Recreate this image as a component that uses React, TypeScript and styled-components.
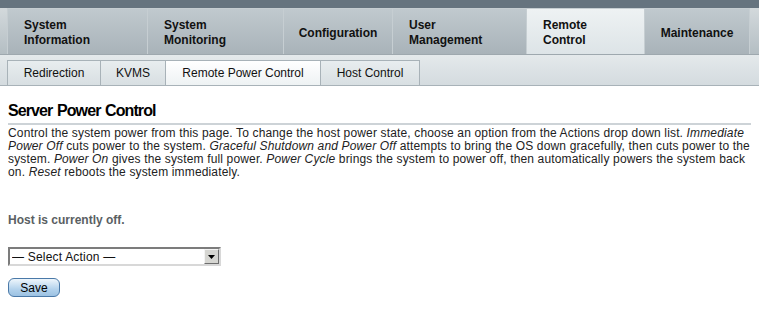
import React from 'react';
import styled, { createGlobalStyle } from 'styled-components';

const GlobalStyle = createGlobalStyle`
  body {
    margin: 0;
    background: #ffffff;
    font-family: "Liberation Sans", Arial, sans-serif;
  }
`;

const Page = styled.div`
  width: 759px;
`;

const TopStrip = styled.div`
  height: 8px;
  background: #66747f;
`;

const MainTabs = styled.div`
  display: flex;
  padding-left: 7px;
  height: 46px;
  background: linear-gradient(#d3d9dc, #b4bec3);
  border-bottom: 1px solid #9ea8ae;
`;

const MainTab = styled.div<{ $w: number; $active?: boolean; $center?: boolean; $first?: boolean }>`
  box-sizing: border-box;
  width: ${(p) => p.$w}px;
  height: 46px;
  border: 1px solid #c6ced2;
  border-left-width: ${(p) => (p.$first ? 1 : 0)}px;
  border-bottom: none;
  background: ${(p) =>
    p.$active
      ? 'linear-gradient(#eef2f3, #dde4e7)'
      : 'linear-gradient(#c0c9ce, #a9b3b9)'};
  display: flex;
  align-items: center;
  justify-content: ${(p) => (p.$center ? 'center' : 'flex-start')};
  padding-left: ${(p) => (p.$center ? 0 : 16)}px;
  padding-top: 3px;
  font-size: 12px;
  font-weight: bold;
  line-height: 15px;
  color: #111;
`;

const TabLabel = styled.span`
  white-space: pre-line;
`;

const SubBar = styled.div`
  display: flex;
  align-items: flex-end;
  height: 30px;
  padding-left: 7px;
  background: linear-gradient(#e4e9eb, #d4dbdf);
  border-bottom: 1px solid #a8b2b8;
`;

const SubTab = styled.div<{ $w: number; $active?: boolean; $first?: boolean }>`
  box-sizing: border-box;
  width: ${(p) => p.$w}px;
  height: 25px;
  border: 1px solid #a8b2b8;
  border-left-width: ${(p) => (p.$first ? 1 : 0)}px;
  border-bottom: none;
  background: ${(p) =>
    p.$active ? 'linear-gradient(#ffffff, #eef2f3)' : 'linear-gradient(#e8edef, #d8dfe2)'};
  display: flex;
  align-items: center;
  justify-content: center;
  font-size: 12px;
  color: #111;
`;

const Content = styled.div`
  padding: 0 0 0 8px;
`;

const Heading = styled.h1`
  margin: 16px 8px 0 0;
  padding-bottom: 3px;
  font-size: 16px;
  line-height: 18px;
  font-weight: bold;
  letter-spacing: -0.9px;
  word-spacing: 1px;
  color: #000;
  border-bottom: 2px solid #cdd3d7;
`;

const Body = styled.p`
  margin: 2px 0 0;
  font-size: 12px;
  line-height: 13px;
  letter-spacing: 0.15px;
  color: #222;
`;

const Status = styled.p`
  margin: 34px 0 0;
  font-size: 12px;
  line-height: 14px;
  font-weight: bold;
  color: #5a5f63;
`;

const SelectBox = styled.div`
  position: relative;
  box-sizing: border-box;
  margin-top: 20px;
  width: 213px;
  height: 19px;
  border-style: solid;
  border-width: 2px;
  border-color: #7c7c7c #d8d8d8 #d8d8d8 #7c7c7c;
  background: #fff;
`;

const Select = styled.select`
  appearance: none;
  display: block;
  width: 100%;
  height: 100%;
  border: none;
  outline: none;
  background: transparent;
  padding: 0 0 0 2px;
  font-family: "Liberation Sans", Arial, sans-serif;
  font-size: 12px;
  letter-spacing: 0.2px;
  color: #111;
`;

const ArrowButton = styled.span`
  position: absolute;
  top: 0;
  right: 0;
  box-sizing: border-box;
  width: 15px;
  height: 15px;
  background: #d6d6d2;
  border-style: solid;
  border-width: 1px;
  border-color: #f4f4f4 #6e6e6e #6e6e6e #f4f4f4;
  display: flex;
  align-items: center;
  justify-content: center;
  pointer-events: none;
`;

const SaveButton = styled.button`
  display: block;
  margin-top: 12px;
  width: 52px;
  height: 19px;
  border: 1px solid #4a79a8;
  border-radius: 6px;
  background: linear-gradient(#eef6fc, #b3d2ec 60%, #9cc2e3);
  font-family: "Liberation Sans", Arial, sans-serif;
  font-size: 12px;
  color: #000;
  padding: 0;
`;

const mainTabs = [
  { label: 'System\nInformation', w: 141 },
  { label: 'System\nMonitoring', w: 136 },
  { label: 'Configuration', w: 109, center: true },
  { label: 'User\nManagement', w: 134 },
  { label: 'Remote\nControl', w: 118, active: true },
  { label: 'Maintenance', w: 105, center: true },
];

const subTabs = [
  { label: 'Redirection', w: 94 },
  { label: 'KVMS', w: 65 },
  { label: 'Remote Power Control', w: 155, active: true },
  { label: 'Host Control', w: 99 },
];

export default function App() {
  return (
    <Page>
      <GlobalStyle />
      <TopStrip />
      <MainTabs>
        {mainTabs.map((t, i) => (
          <MainTab key={t.label} $w={t.w} $active={t.active} $center={t.center} $first={i === 0}>
            <TabLabel>{t.label}</TabLabel>
          </MainTab>
        ))}
      </MainTabs>
      <SubBar>
        {subTabs.map((t, i) => (
          <SubTab key={t.label} $w={t.w} $active={t.active} $first={i === 0}>
            {t.label}
          </SubTab>
        ))}
      </SubBar>
      <Content>
        <Heading>Server Power Control</Heading>
        <Body>
          Control the system power from this page. To change the host power state, choose an option
          from the Actions drop down list. <i>Immediate Power Off</i> cuts power to the system.{' '}
          <i>Graceful Shutdown and Power Off</i> attempts to bring the OS down gracefully, then cuts
          power to the system. <i>Power On</i> gives the system full power. <i>Power Cycle</i> brings
          the system to power off, then automatically powers the system back on. <i>Reset</i> reboots
          the system immediately.
        </Body>
        <Status>Host is currently off.</Status>
        <SelectBox>
          <Select defaultValue="">
            <option value="">— Select Action —</option>
          </Select>
          <ArrowButton>
            <svg width="7" height="4" viewBox="0 0 7 4">
              <path d="M0 0h7L3.5 4z" fill="#000" />
            </svg>
          </ArrowButton>
        </SelectBox>
        <SaveButton>Save</SaveButton>
      </Content>
    </Page>
  );
}
